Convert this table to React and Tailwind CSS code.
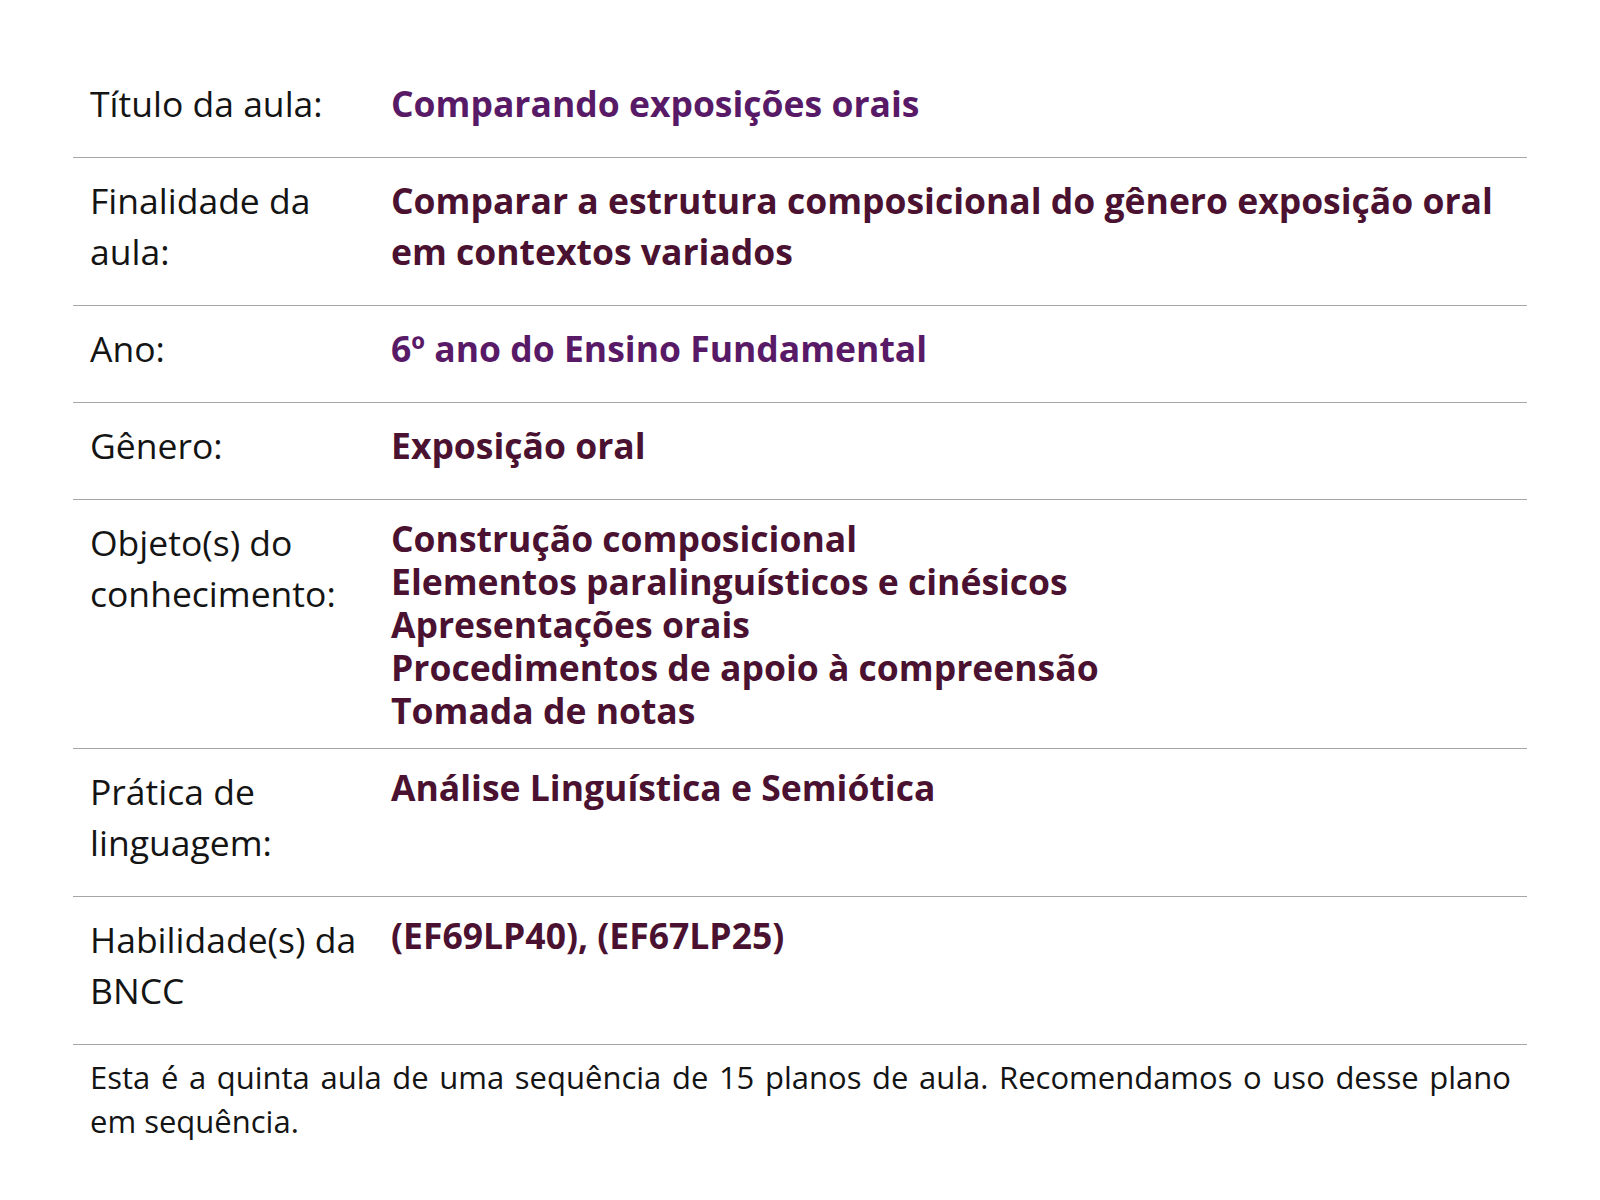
const rows = [
  { label: 'Título da aula:', value: ['Comparando exposições orais'], tone: 'purple', loose: true },
  { label: 'Finalidade da aula:', value: ['Comparar a estrutura composicional do gênero exposição oral em contextos variados'], loose: true },
  { label: 'Ano:', value: ['6º ano do Ensino Fundamental'], tone: 'purple', loose: true },
  { label: 'Gênero:', value: ['Exposição oral'], loose: true },
  {
    label: 'Objeto(s) do conhecimento:',
    value: [
      'Construção composicional',
      'Elementos paralinguísticos e cinésicos',
      'Apresentações orais',
      'Procedimentos de apoio à compreensão',
      'Tomada de notas',
    ],
  },
  { label: 'Prática de linguagem:', value: ['Análise Linguística e Semiótica'] },
  { label: 'Habilidade(s) da BNCC', value: ['(EF69LP40), (EF67LP25)'] },
]

export default function App() {
  return (
    <div className="min-h-screen bg-white" style={{ fontFamily: '"Open Sans", sans-serif' }}>
      <div className="ml-[73px] w-[1454px] pt-[61px]">
        {rows.map((r) => (
          <div key={r.label} className="grid grid-cols-[318px_1fr] items-start border-b border-[#a6a6a6] pt-[17px]">
            <div className="pl-[17px] pr-4 pb-[28px] text-[35.5px] leading-[51px] text-[#141414]">{r.label}</div>
            <div
              className={`pr-4 font-bold text-[35.5px] ${r.loose ? 'leading-[51px] pb-[28px]' : 'leading-[43px] pb-[16px]'} ${
                r.tone === 'purple' ? 'text-[#581a66]' : 'text-[#4a1230]'
              }`}
            >
              {r.value.map((v) => (
                <div key={v}>{v}</div>
              ))}
            </div>
          </div>
        ))}
        <p className="pl-[17px] pr-[16px] pt-[10px] text-[31px] leading-[44px] text-justify text-[#141414]">
          Esta é a quinta aula de uma sequência de 15 planos de aula. Recomendamos o uso desse plano em sequência.
        </p>
      </div>
    </div>
  )
}
